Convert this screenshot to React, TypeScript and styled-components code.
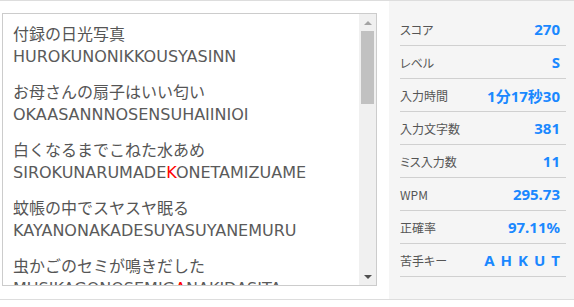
import styled, { createGlobalStyle } from "styled-components";

const GlobalStyle = createGlobalStyle`
  html, body {
    margin: 0;
    padding: 0;
    background: #ffffff;
  }
  body {
    font-family: "Noto Sans", "Noto Sans CJK JP", sans-serif;
  }
`;

const Page = styled.div`
  display: flex;
  width: 574px;
  height: 298px;
  border-top: 1px solid #dddddd;
  border-bottom: 1px solid #dddddd;
  overflow: hidden;
`;

const TextBox = styled.div`
  display: flex;
  width: 373px;
  height: 271px;
  margin: 12px 12px 0 2px;
  border: 1px solid #cccccc;
  background: #ffffff;
`;

const Words = styled.div`
  flex: 1;
  overflow: hidden;
  padding: 7px 0 0 10px;
  color: #555555;
  font-family: "Noto Sans CJK JP", sans-serif;
  font-size: 16px;
  line-height: 24px;
`;

const Entry = styled.div`
  margin-bottom: 10px;
`;

const Reading = styled.div`
  font-family: "DejaVu Sans", "Noto Sans CJK JP", sans-serif;
  color: #5a5a5a;
`;

const Miss = styled.span`
  color: #ff0000;
`;

const ScrollBar = styled.div`
  width: 17px;
  display: flex;
  flex-direction: column;
  background: #f0f0f0;
`;

const Arrow = styled.div<{ $down?: boolean }>`
  height: 17px;
  display: flex;
  align-items: center;
  justify-content: center;
  &::after {
    content: "";
    width: 0;
    height: 0;
    border-left: 4px solid transparent;
    border-right: 4px solid transparent;
    ${(p) =>
      p.$down
        ? "border-top: 4px solid #505050;"
        : "border-bottom: 4px solid #a3a3a3;"}
  }
`;

const Track = styled.div`
  flex: 1;
  padding: 0 2px;
`;

const Thumb = styled.div`
  height: 73px;
  background: #c1c1c1;
`;

const Stats = styled.div`
  flex: 1;
  background: #f5f5f5;
  padding: 12px 8px 0 11px;
`;

const Row = styled.div`
  display: flex;
  align-items: center;
  justify-content: space-between;
  height: 32px;
  border-bottom: 1px solid #d0d0d0;
  padding-right: 6px;
`;

const Label = styled.span`
  font-family: "Noto Sans CJK JP", sans-serif;
  font-feature-settings: "palt";
  font-size: 12px;
  color: #555555;
`;

const Value = styled.span<{ $spaced?: boolean }>`
  font-family: "Noto Sans", "Noto Sans CJK JP", sans-serif;
  font-size: 15px;
  font-weight: 700;
  color: #1a88ff;
  letter-spacing: ${(p) => (p.$spaced ? "6px" : "0")};
  margin-right: ${(p) => (p.$spaced ? "-6px" : "0")};
`;

const words = [
  { ja: "付録の日光写真", ro: ["HUROKUNONIKKOUSYASINN"] },
  { ja: "お母さんの扇子はいい匂い", ro: ["OKAASANNNOSENSUHAIINIOI"] },
  { ja: "白くなるまでこねた水あめ", ro: ["SIROKUNARUMADE", "K", "ONETAMIZUAME"] },
  { ja: "蚊帳の中でスヤスヤ眠る", ro: ["KAYANONAKADESUYASUYANEMURU"] },
  { ja: "虫かごのセミが鳴きだした", ro: ["MUSIKAGONOSEMIG", "A", "NAKIDASITA"] },
];

const stats = [
  { label: "スコア", value: "270" },
  { label: "レベル", value: "S" },
  { label: "入力時間", value: "1分17秒30" },
  { label: "入力文字数", value: "381" },
  { label: "ミス入力数", value: "11" },
  { label: "WPM", value: "295.73" },
  { label: "正確率", value: "97.11%" },
  { label: "苦手キー", value: "AHKUT", spaced: true },
];

export default function App() {
  return (
    <>
      <GlobalStyle />
      <Page>
        <TextBox>
          <Words>
            {words.map((w) => (
              <Entry key={w.ja}>
                <div>{w.ja}</div>
                <Reading>
                  {w.ro[0]}
                  {w.ro[1] && <Miss>{w.ro[1]}</Miss>}
                  {w.ro[2]}
                </Reading>
              </Entry>
            ))}
          </Words>
          <ScrollBar>
            <Arrow />
            <Track>
              <Thumb />
            </Track>
            <Arrow $down />
          </ScrollBar>
        </TextBox>
        <Stats>
          {stats.map((s) => (
            <Row key={s.label}>
              <Label>{s.label}</Label>
              <Value $spaced={s.spaced}>{s.value}</Value>
            </Row>
          ))}
        </Stats>
      </Page>
    </>
  );
}
